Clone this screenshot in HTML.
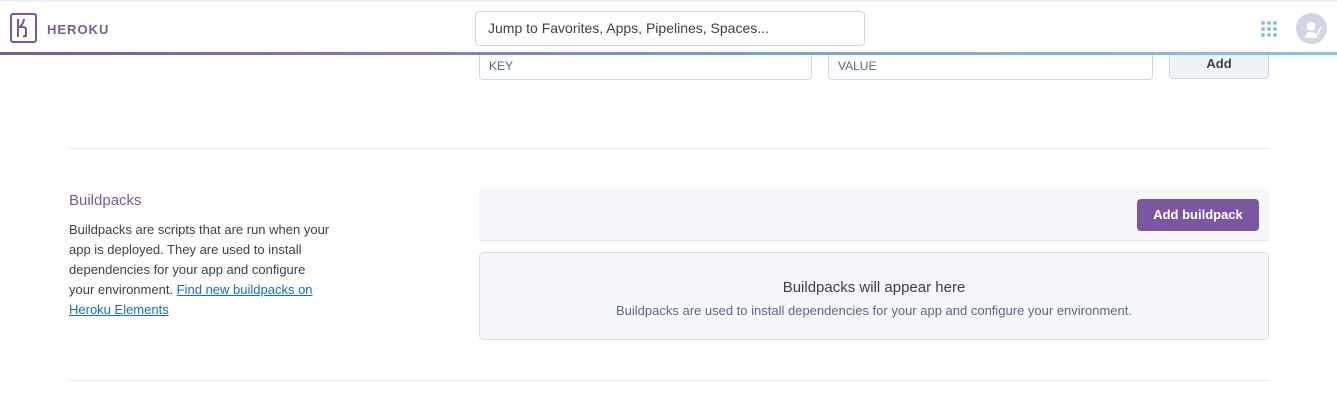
<!DOCTYPE html>
<html><head><style>
*{box-sizing:border-box;margin:0;padding:0}
body{width:1337px;height:411px;overflow:hidden;background:#fff;font-family:"Liberation Sans",sans-serif;position:relative;color:#3f3f44}
.hdr{position:absolute;left:0;top:0;width:1337px;height:55px;background:#fff;border-top:2px solid #eeeef5;z-index:2}
.bar{position:absolute;left:0;top:52px;width:1337px;height:3px;background:linear-gradient(90deg,#79589f,#7fa2cf 60%,#83c6e2);z-index:3}
.abs{position:absolute}
.inp{position:absolute;border:1px solid #cfd7e6;border-radius:4px;background:#fff;font-size:12px;color:#596981;padding-left:9px}
</style></head><body>
<div class="hdr">
<svg class="abs" style="left:10px;top:11px" width="27" height="30" viewBox="0 0 27 30"><rect x="1" y="1" width="25" height="28" rx="2" fill="none" stroke="#79589f" stroke-width="2"/><path d="M8 6v18M8 14h5q3 0 3 3v7M8 14q5-1 6-8M16 22l-3 2" fill="none" stroke="#79589f" stroke-width="2"/></svg>
<div class="abs" style="left:47px;top:20px;font-size:13px;font-weight:bold;color:#79589f;letter-spacing:1px">HEROKU</div>
<div class="inp" style="left:475px;top:9px;width:390px;height:35px;line-height:33px;font-size:14px;color:#3f3f44;padding-left:12px">Jump to Favorites, Apps, Pipelines, Spaces...</div>
<svg class="abs" style="left:1260px;top:18px" width="18" height="18"><g fill="#8cc3e3"><circle cx="3" cy="3" r="2"/><circle cx="9" cy="3" r="2"/><circle cx="15" cy="3" r="2"/><circle cx="3" cy="9" r="2"/><circle cx="9" cy="9" r="2"/><circle cx="15" cy="9" r="2"/><circle cx="3" cy="15" r="2"/><circle cx="9" cy="15" r="2"/><circle cx="15" cy="15" r="2"/></g></svg>
<div class="abs" style="left:1296px;top:11px;width:31px;height:31px;border-radius:50%;background:#d0d6e6"><svg width="31" height="31"><path d="M9 25q0-6 6-6t6 6z M11 11q4-4 8 0v5q-4 3-8 0z" fill="#fff"/><path d="M21 22l4-8" stroke="#fff" stroke-width="1.5"/></svg></div>
</div>
<div class="bar"></div>
<div class="inp" style="left:479px;top:48px;width:333px;height:32px;line-height:30px;padding-top:2px">KEY</div>
<div class="inp" style="left:828px;top:48px;width:325px;height:32px;line-height:30px;padding-top:2px">VALUE</div>
<div class="abs" style="left:1169px;top:48px;width:100px;height:31px;border:1px solid #cfd7e6;border-radius:4px;background:#eef1f6;text-align:center;line-height:26px;padding-top:2px;font-size:13px;font-weight:bold;color:#3f3f44">Add</div>
<div class="abs" style="left:69px;top:148px;width:1201px;height:1px;background:#e6e9ef"></div>
<div class="abs" style="left:69px;top:192px;font-size:15px;color:#79589f">Buildpacks</div>
<div class="abs" style="left:69px;top:220px;width:300px;font-size:13px;line-height:20px;color:#3f3f44;white-space:nowrap">Buildpacks are scripts that are run when your<br>app is deployed. They are used to install<br>dependencies for your app and configure<br>your environment. <span style="color:#0f6ecf;text-decoration:underline">Find new buildpacks on</span><br><span style="color:#0f6ecf;text-decoration:underline">Heroku Elements</span></div>
<div class="abs" style="left:479px;top:189px;width:790px;height:52px;background:#f6f7fa;border-bottom:1px solid #e3e6ee"></div>
<div class="abs" style="left:1137px;top:199px;width:122px;height:32px;background:#79589f;border-radius:4px;color:#fff;font-size:13px;font-weight:bold;text-align:center;line-height:32px">Add buildpack</div>
<div class="abs" style="left:479px;top:252px;width:790px;height:88px;background:#f6f7fa;border:1px solid #d7dbe5;border-radius:5px;text-align:center">
<div style="margin-top:26px;font-size:15px;color:#3f3f44">Buildpacks will appear here</div>
<div style="margin-top:7px;font-size:13px;color:#596981">Buildpacks are used to install dependencies for your app and configure your environment.</div>
</div>
<div class="abs" style="left:69px;top:380px;width:1201px;height:1px;background:#e6e9ef"></div>
</body></html>
